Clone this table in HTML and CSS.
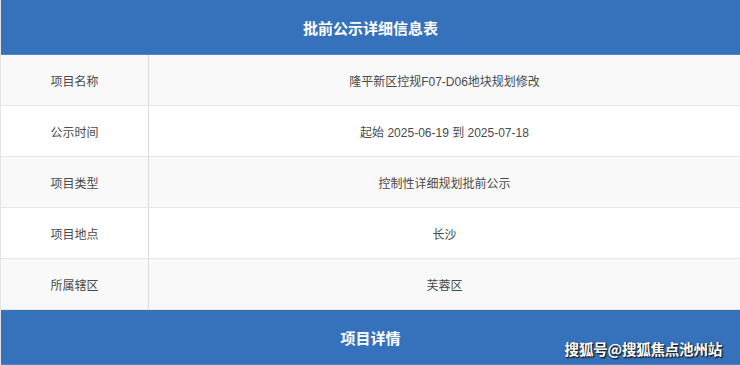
FILE: index.html
```html
<!DOCTYPE html>
<html lang="zh">
<head>
<meta charset="utf-8">
<link rel="stylesheet" href="styles.css">
</head>
<body>
<div class="page">
  <div class="band">批前公示详细信息表</div>
  <div class="table">
    <div class="row odd"><div class="key">项目名称</div><div class="val">隆平新区控规F07-D06地块规划修改</div></div>
    <div class="row"><div class="key">公示时间</div><div class="val">起始 2025-06-19 到 2025-07-18</div></div>
    <div class="row odd"><div class="key">项目类型</div><div class="val">控制性详细规划批前公示</div></div>
    <div class="row"><div class="key">项目地点</div><div class="val">长沙</div></div>
    <div class="row odd"><div class="key">所属辖区</div><div class="val">芙蓉区</div></div>
  </div>
  <div class="band">项目详情</div>
  <div class="watermark">搜狐号@搜狐焦点池州站</div>
</div>
</body>
</html>
```

FILE: styles.css
```css
html, body {
  margin: 0;
  padding: 0;
  background: #ffffff;
}
body {
  font-family: "Liberation Sans", "Noto Sans CJK SC", sans-serif;
  width: 740px;
  height: 365px;
  overflow: hidden;
}
.page {
  position: relative;
  border-left: 1px solid #e4e4e4;
  height: 365px;
  box-sizing: border-box;
}
.band {
  background: #3572bb;
  color: #ffffff;
  font-weight: 700;
  font-size: 15px;
  height: 54px;
  display: flex;
  align-items: center;
  justify-content: center;
  border-bottom: 1px solid #4f86c8;
}
.table {
  display: flex;
  flex-direction: column;
}
.row {
  display: grid;
  grid-template-columns: 148px 1fr;
  height: 50px;
  border-bottom: 1px solid #e6e6e6;
  background: #ffffff;
  color: #4a4a4a;
  font-size: 12px;
}
.row.odd {
  background: #f9f9f9;
}
.key, .val {
  display: flex;
  align-items: center;
  justify-content: center;
}
.key {
  border-right: 1px solid #dcdcdc;
}
.watermark {
  position: absolute;
  right: 18px;
  bottom: 6px;
  color: #ffffff;
  font-family: "Noto Sans CJK SC", sans-serif;
  font-weight: 700;
  font-size: 14.5px;
  letter-spacing: -0.2px;
  text-shadow: 1px 1px 1px #1a1a1a, 1px 1px 2px rgba(0,0,0,0.6);
}
```
